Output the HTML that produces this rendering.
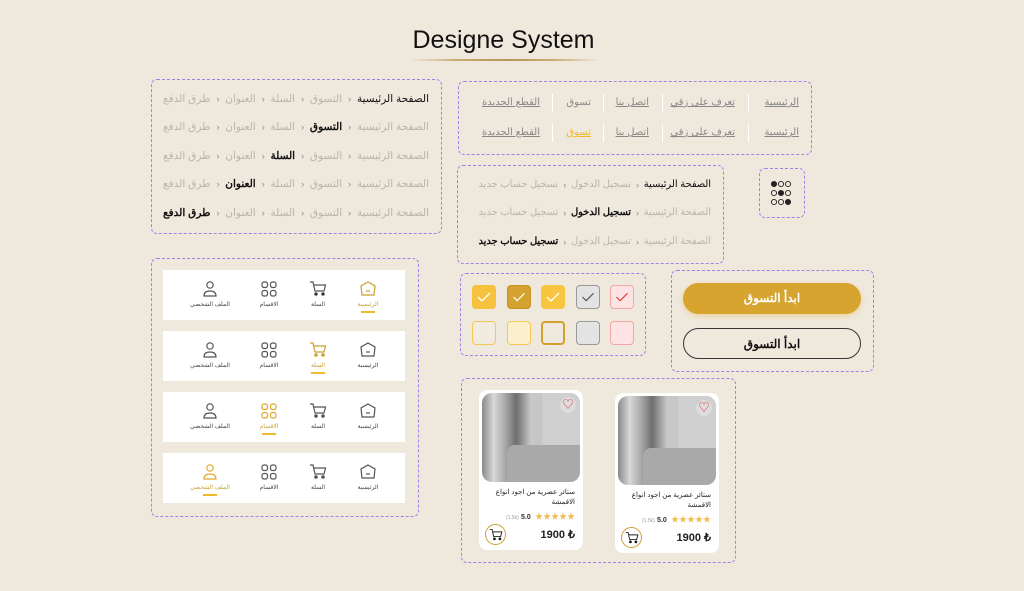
<!DOCTYPE html>
<html><head><meta charset="utf-8"><style>
*{margin:0;padding:0;box-sizing:border-box}
body{width:1024px;height:591px;overflow:hidden;background:#efe8dd;font-family:"Liberation Sans","Noto Sans CJK SC",sans-serif;position:relative;color:#222}
.box{position:absolute;border:1.5px dashed #a77fe6;border-radius:6px}
.abs{position:absolute}
.bc{position:absolute;right:0;display:flex;flex-direction:row-reverse;align-items:center;gap:6px;font-size:10.5px;color:#b9b4ad;white-space:nowrap;letter-spacing:-0.2px}
.bc.s{font-size:9.8px;gap:5px}
.bc b{color:#111;font-weight:bold}
.bc .a{color:#111}
.bc i{font-style:normal;font-size:9px;color:#888}
.nv{position:absolute;font-size:10px;color:#888;text-decoration:underline;white-space:nowrap;line-height:14px}
.sep{position:absolute;width:1px;height:18px;background:#fff}
.card{position:absolute;left:11px;width:242px;height:50px;background:#fff}
.it{position:absolute;top:10px;width:50px;text-align:center;font-size:6px;color:#444}
.it svg{display:block;margin:0 auto 3px}
.it.on{color:#c9a032}
.it.on:after{content:"";display:block;width:14px;height:2px;background:#f0b92e;margin:3px auto 0}
.cb{position:absolute;width:24px;height:24px;border-radius:4px}
.btn{position:absolute;left:11px;width:178px;height:31px;border-radius:16px;text-align:center;line-height:31px;font-size:12px;font-weight:bold}
.pc{position:absolute;width:104px;height:160px;background:#fff;border-radius:8px}
.img{position:absolute;left:3px;top:3px;width:98px;height:89px;border-radius:10px;background:linear-gradient(90deg,#8a8a8a 0%,#d8d8d8 12%,#b0b0b0 22%,#6f6f6f 35%,#c8c8c8 50%,#bdbdbd 100%);overflow:hidden}
.img:before{content:"";position:absolute;left:60px;top:0;width:38px;height:89px;background:#cfcfcf}
.img:after{content:"";position:absolute;left:25px;top:52px;width:75px;height:37px;background:#a9a9a9;border-radius:8px 0 0 0}
.heart{position:absolute;right:4px;top:4px;width:16px;height:16px;border-radius:50%;background:#ddd;color:#e33;font-size:11px;text-align:center;line-height:16px;z-index:2}
.pt{position:absolute;right:8px;top:98px;font-size:7px;text-align:right;line-height:10px;color:#222;width:90px}
.st{position:absolute;right:8px;top:121px;font-size:8px;color:#f0b94a;white-space:nowrap}
.st b{color:#333;font-size:7px;margin-right:2px}
.pr{position:absolute;right:8px;top:138px;font-size:11px;font-weight:bold}
.cart{position:absolute;left:6px;top:134px;width:21px;height:21px;border-radius:50%;border:1px solid #c9a032}
.cart svg{position:absolute;left:3px;top:3px}
</style></head><body>

<div class="abs" style="left:0;top:26px;width:1007px;text-align:center;font-size:25px;color:#111">Designe System</div>
<div class="abs" style="left:410px;top:59px;width:190px;height:2px;background:linear-gradient(90deg,transparent,#c9aa70,#b8955a,#c9aa70,transparent);border-radius:2px"></div>

<div class="box" style="left:151px;top:79px;width:291px;height:155px">
 <div class="bc" style="right:12px;top:13px"><span class="a">الصفحة الرئيسية</span><i>›</i><span>التسوق</span><i>›</i><span>السلة</span><i>›</i><span>العنوان</span><i>›</i><span>طرق الدفع</span></div>
 <div class="bc" style="right:12px;top:41px"><span>الصفحة الرئيسية</span><i>›</i><b>التسوق</b><i>›</i><span>السلة</span><i>›</i><span>العنوان</span><i>›</i><span>طرق الدفع</span></div>
 <div class="bc" style="right:12px;top:70px"><span>الصفحة الرئيسية</span><i>›</i><span>التسوق</span><i>›</i><b>السلة</b><i>›</i><span>العنوان</span><i>›</i><span>طرق الدفع</span></div>
 <div class="bc" style="right:12px;top:98px"><span>الصفحة الرئيسية</span><i>›</i><span>التسوق</span><i>›</i><span>السلة</span><i>›</i><b>العنوان</b><i>›</i><span>طرق الدفع</span></div>
 <div class="bc" style="right:12px;top:127px"><span>الصفحة الرئيسية</span><i>›</i><span>التسوق</span><i>›</i><span>السلة</span><i>›</i><span>العنوان</span><i>›</i><b>طرق الدفع</b></div>
</div>

<div class="box" style="left:458px;top:81px;width:354px;height:74px">
 <span class="nv" style="right:12px;top:14px">الرئيسية</span>
 <span class="nv" style="right:76px;top:14px">تعرف على زقي</span>
 <span class="nv" style="right:162px;top:14px">اتصل بنا</span>
 <span class="nv" style="right:220px;top:14px;text-decoration:none">تسوق</span>
 <span class="nv" style="right:271px;top:14px">القطع الجديدة</span>
 <span class="nv" style="right:12px;top:44px">الرئيسية</span>
 <span class="nv" style="right:76px;top:44px">تعرف على زقي</span>
 <span class="nv" style="right:162px;top:44px">اتصل بنا</span>
 <span class="nv" style="right:220px;top:44px;color:#f0b92e">تسوق</span>
 <span class="nv" style="right:271px;top:44px">القطع الجديدة</span>
 <div class="sep" style="left:289px;top:12px"></div><div class="sep" style="left:203px;top:12px"></div><div class="sep" style="left:144px;top:12px"></div><div class="sep" style="left:93px;top:12px"></div>
 <div class="sep" style="left:289px;top:42px"></div><div class="sep" style="left:203px;top:42px"></div><div class="sep" style="left:144px;top:42px"></div><div class="sep" style="left:93px;top:42px"></div>
</div>

<div class="box" style="left:457px;top:165px;width:267px;height:99px">
 <div class="bc s" style="right:12px;top:13px"><span class="a">الصفحة الرئيسية</span><i>›</i><span>تسجيل الدخول</span><i>›</i><span>تسجيل حساب جديد</span></div>
 <div class="bc s" style="right:12px;top:41px"><span>الصفحة الرئيسية</span><i>›</i><b>تسجيل الدخول</b><i>›</i><span>تسجيل حساب جديد</span></div>
 <div class="bc s" style="right:12px;top:70px"><span>الصفحة الرئيسية</span><i>›</i><span>تسجيل الدخول</span><i>›</i><b>تسجيل حساب جديد</b></div>
</div>

<div class="box" style="left:759px;top:168px;width:46px;height:50px">
<svg class="abs" style="left:10px;top:11px" width="26" height="26" viewBox="0 0 26 26" fill="none" stroke="#222" stroke-width="0.9">
<circle cx="4" cy="4" r="2.6" fill="#222"/><circle cx="11" cy="4" r="2.6"/><circle cx="18" cy="4" r="2.6"/>
<circle cx="4" cy="13" r="2.6"/><circle cx="11" cy="13" r="2.6" fill="#222"/><circle cx="18" cy="13" r="2.6"/>
<circle cx="4" cy="22" r="2.6"/><circle cx="11" cy="22" r="2.6"/><circle cx="18" cy="22" r="2.6" fill="#222"/>
</svg></div>

<div class="box" style="left:151px;top:258px;width:268px;height:259px">
 <svg width="0" height="0" style="position:absolute"><defs>
 <g id="home"><path d="M9 2 L16 6 L15 15 L3 15 L2 6 Z" fill="none" stroke-width="1.2"/><path d="M7 11 h4" stroke-width="1.2"/></g>
 <g id="cart"><path d="M1 2 h3 l2 9 h9 l1.5-6 H5" fill="none" stroke-width="1.2"/><circle cx="7" cy="14" r="1.3"/><circle cx="14" cy="14" r="1.3"/></g>
 <g id="grid"><rect x="2" y="2" width="5.5" height="5.5" rx="2" fill="none" stroke-width="1.2"/><rect x="10.5" y="2" width="5.5" height="5.5" rx="2" fill="none" stroke-width="1.2"/><rect x="2" y="10.5" width="5.5" height="5.5" rx="2" fill="none" stroke-width="1.2"/><rect x="10.5" y="10.5" width="5.5" height="5.5" rx="2" fill="none" stroke-width="1.2"/></g>
 <g id="user"><circle cx="9" cy="5" r="3.2" fill="none" stroke-width="1.2"/><path d="M3 16 q0-5 6-5 q6 0 6 5 z" fill="none" stroke-width="1.2"/></g>
 </defs></svg>
 <div class="card" style="top:11px">
  <div class="it on" style="left:180px"><svg width="18" height="18" stroke="#c9a032"><use href="#home"/></svg>الرئيسية</div>
  <div class="it" style="left:130px"><svg width="18" height="18" stroke="#555"><use href="#cart"/></svg>السلة</div>
  <div class="it" style="left:81px"><svg width="18" height="18" stroke="#555"><use href="#grid"/></svg>الاقسام</div>
  <div class="it" style="left:22px"><svg width="18" height="18" stroke="#555"><use href="#user"/></svg>الملف الشخصي</div>
 </div>
 <div class="card" style="top:72px">
  <div class="it" style="left:180px"><svg width="18" height="18" stroke="#555"><use href="#home"/></svg>الرئيسية</div>
  <div class="it on" style="left:130px"><svg width="18" height="18" stroke="#c9a032" fill="#c9a032"><use href="#cart"/></svg>السلة</div>
  <div class="it" style="left:81px"><svg width="18" height="18" stroke="#555"><use href="#grid"/></svg>الاقسام</div>
  <div class="it" style="left:22px"><svg width="18" height="18" stroke="#555"><use href="#user"/></svg>الملف الشخصي</div>
 </div>
 <div class="card" style="top:133px">
  <div class="it" style="left:180px"><svg width="18" height="18" stroke="#555"><use href="#home"/></svg>الرئيسية</div>
  <div class="it" style="left:130px"><svg width="18" height="18" stroke="#555" fill="#555"><use href="#cart"/></svg>السلة</div>
  <div class="it on" style="left:81px"><svg width="18" height="18" stroke="#e0a82e"><use href="#grid"/></svg>الاقسام</div>
  <div class="it" style="left:22px"><svg width="18" height="18" stroke="#555"><use href="#user"/></svg>الملف الشخصي</div>
 </div>
 <div class="card" style="top:194px">
  <div class="it" style="left:180px"><svg width="18" height="18" stroke="#555"><use href="#home"/></svg>الرئيسية</div>
  <div class="it" style="left:130px"><svg width="18" height="18" stroke="#555" fill="#555"><use href="#cart"/></svg>السلة</div>
  <div class="it" style="left:81px"><svg width="18" height="18" stroke="#555"><use href="#grid"/></svg>الاقسام</div>
  <div class="it on" style="left:22px"><svg width="18" height="18" stroke="#e0a82e"><use href="#user"/></svg>الملف الشخصي</div>
 </div>
</div>

<div class="box" style="left:460px;top:273px;width:186px;height:83px">
 <svg class="cb" style="left:11px;top:11px;background:#f6c23e" viewBox="0 0 24 24"><path d="M6 12 l4 4 l8-8" stroke="#fff" fill="none" stroke-width="1.3"/></svg>
 <svg class="cb" style="left:46px;top:11px;background:#d4a22e;border:1px solid #c49327" viewBox="0 0 24 24"><path d="M6 12 l4 4 l8-8" stroke="#fff" fill="none" stroke-width="1.3"/></svg>
 <svg class="cb" style="left:80px;top:11px;background:#f8c540" viewBox="0 0 24 24"><path d="M6 12 l4 4 l8-8" stroke="#fff" fill="none" stroke-width="1.3"/></svg>
 <svg class="cb" style="left:115px;top:11px;background:#e3e3e3;border:1px solid #999" viewBox="0 0 24 24"><path d="M6 12 l4 4 l8-8" stroke="#555" fill="none" stroke-width="1.3"/></svg>
 <svg class="cb" style="left:149px;top:11px;background:#fde3e3;border:1px solid #f4a5a5" viewBox="0 0 24 24"><path d="M6 12 l4 4 l8-8" stroke="#e53935" fill="none" stroke-width="1.3"/></svg>
 <div class="cb" style="left:11px;top:47px;border:1px solid #f3c75a;background:#f2ebdf"></div>
 <div class="cb" style="left:46px;top:47px;border:1px solid #f3c75a;background:#fbefcc"></div>
 <div class="cb" style="left:80px;top:47px;border:2px solid #d4a22e;background:#efe8dd"></div>
 <div class="cb" style="left:115px;top:47px;border:1px solid #999;background:#e3e3e3"></div>
 <div class="cb" style="left:149px;top:47px;border:1px solid #f4a5a5;background:#fde3e3"></div>
</div>

<div class="box" style="left:671px;top:270px;width:203px;height:102px">
 <div class="btn" style="top:12px;background:#d6a42f;color:#fff;box-shadow:0 2px 6px rgba(230,180,60,.4)">ابدأ التسوق</div>
 <div class="btn" style="top:57px;border:1px solid #333;color:#111">ابدأ التسوق</div>
</div>

<div class="box" style="left:461px;top:378px;width:275px;height:185px">
 <div class="pc" style="left:17px;top:11px">
  <div class="img"><div class="heart">♡</div></div>
  <div class="pt">ستائر عصرية من اجود انواع الاقمشة</div>
  <div class="st"><span style="color:#999;font-size:5px">(1.5k)</span> <b>5.0</b> ★★★★★</div>
  <div class="pr">1900 ₺</div>
  <div class="cart"><svg width="14" height="14" viewBox="0 0 18 18" stroke="#222"><use href="#cart"/></svg></div>
 </div>
 <div class="pc" style="left:153px;top:14px">
  <div class="img"><div class="heart">♡</div></div>
  <div class="pt">ستائر عصرية من اجود انواع الاقمشة</div>
  <div class="st"><span style="color:#999;font-size:5px">(1.5k)</span> <b>5.0</b> ★★★★★</div>
  <div class="pr">1900 ₺</div>
  <div class="cart"><svg width="14" height="14" viewBox="0 0 18 18" stroke="#222"><use href="#cart"/></svg></div>
 </div>
</div>
</body></html>
